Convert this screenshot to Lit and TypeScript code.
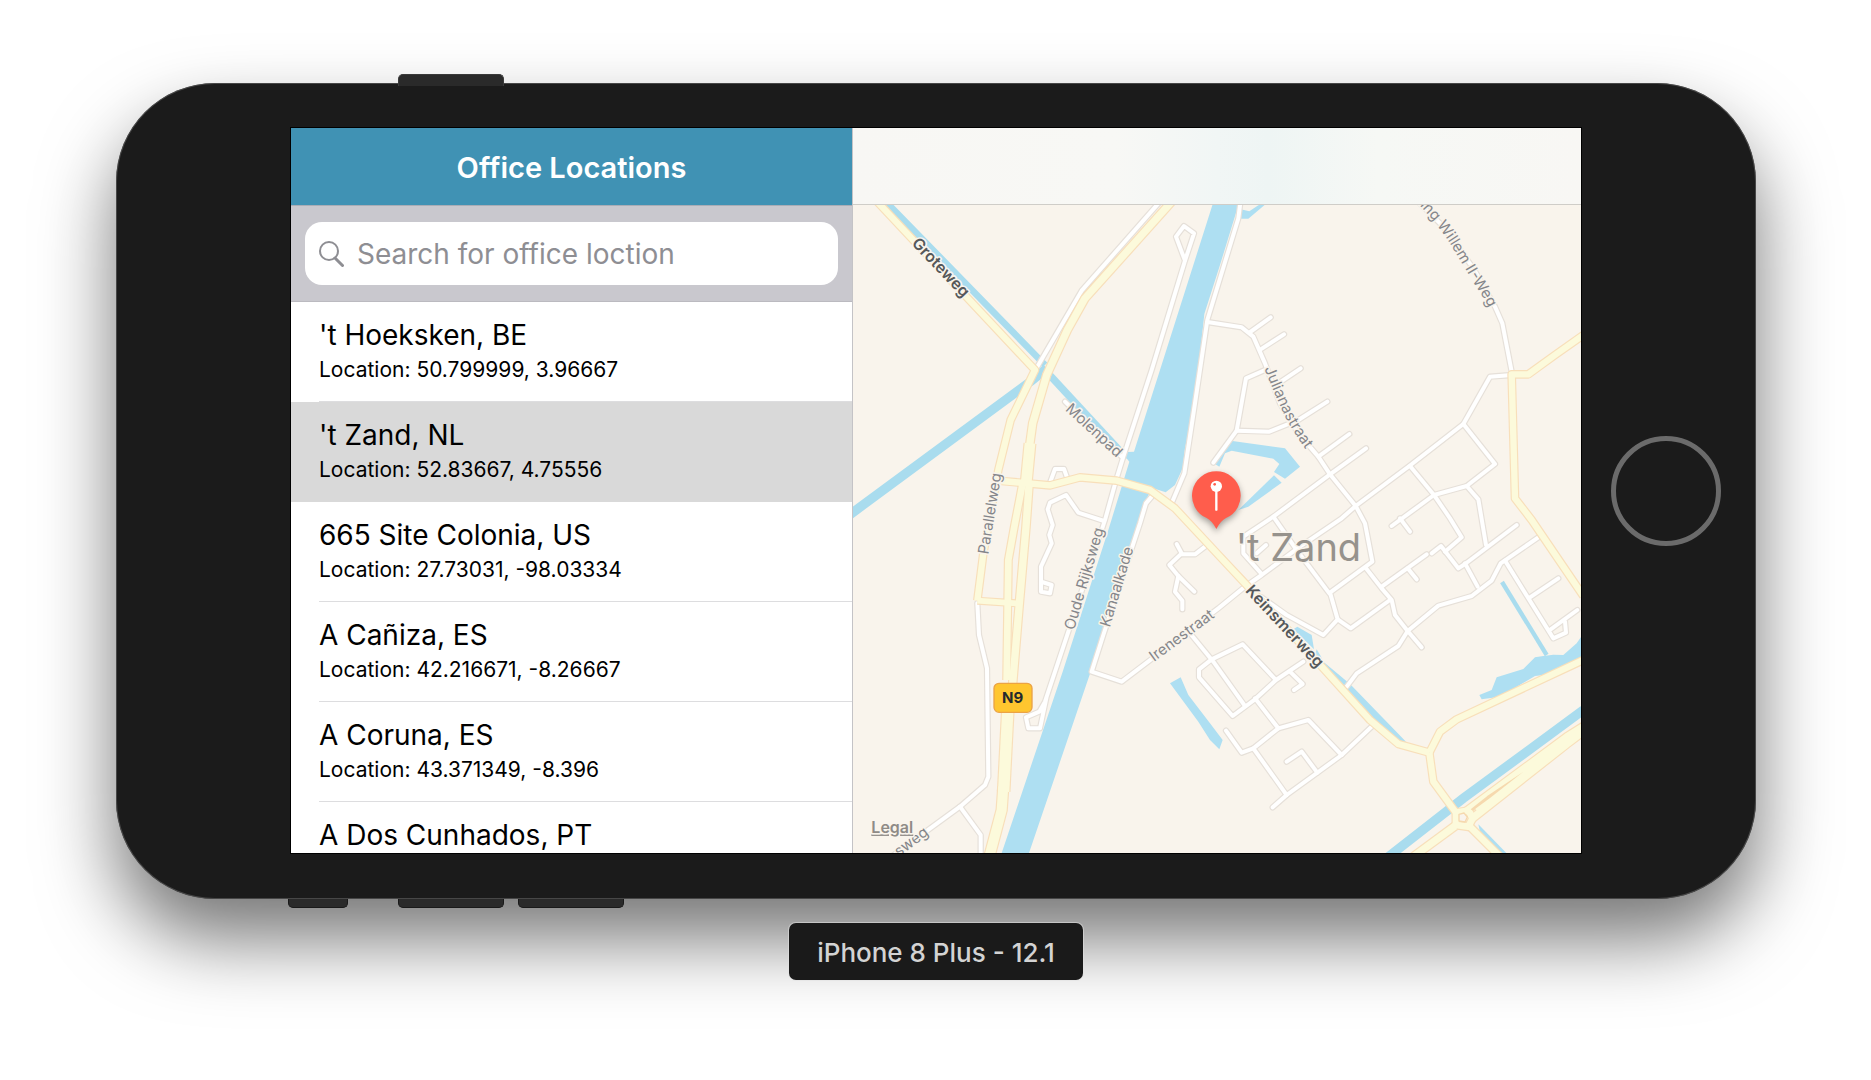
import { LitElement, html, css, svg } from "lit";
import { customElement, property, state } from "lit/decorators.js";
import { classMap } from "lit/directives/class-map.js";

interface Office {
  name: string;
  location: string;
}

const OFFICES: Office[] = [
  { name: "'t Hoeksken, BE", location: "50.799999, 3.96667" },
  { name: "'t Zand, NL", location: "52.83667, 4.75556" },
  { name: "665 Site Colonia, US", location: "27.73031, -98.03334" },
  { name: "A Cañiza, ES", location: "42.216671, -8.26667" },
  { name: "A Coruna, ES", location: "43.371349, -8.396" },
  { name: "A Dos Cunhados, PT", location: "" },
];

/* Map geometry, three units to one pixel at the default size. */

const WATER_AREAS = [
  "M1237,-186 L1165,46 L1110,225 L1063,372 L1035,640 L1005,775 L998,835 L975,885 L947,907 L905,893 L880,950 L865,1000 L722,1445 L535,1995 L453,1995 L638,1445 L775,1020 L838,815 L826,800 L832,786 L852,785 L1087,46 L1160,-186 Z",
  "M1142,752 L1305,775 L1350,830 L1305,866 L1272,846 L1288,822 L1270,806 L1145,782 L1125,790 L1108,830 L1095,822 Z",
  "M1272,856 L1295,878 L1195,950 L1165,960 Z",
  "M1172,58 L1198,64 L1225,46 L1250,40 L1195,86 L1172,86 Z",
  "M1342,1310 L1385,1335 L1392,1378 L1330,1318 Z",
  "M1400,1378 L1412,1398 L1420,1415 L1500,1482 L1668,1655 L1640,1660 L1560,1595 L1390,1410 Z",
  "M1888,1515 L1925,1500 L1940,1462 L2020,1437 L2055,1402 L2080,1398 L2110,1394 L2140,1395 L2180,1360 L2195,1338 L2195,1400 L2080,1455 L2055,1458 L1950,1520 L1895,1528 Z",
  "M1885,1903 L1972,1992 L1945,1996 L1892,1935 Z",
  "M960,1480 L992,1462 L1015,1515 L1080,1600 L1118,1650 L1108,1678 L1080,1650 L1045,1595 Z",
];

const CANALS = [
  { d: "M-115,-190 L118,46 L585,525", w: 20 },
  { d: "M585,540 L830,805", w: 22 },
  { d: "M-10,981 L545,572 L590,535", w: 28 },
  { d: "M1956,1176 L2090,1395", w: 13 },
  { d: "M2200,1560 L1840,1825 L1600,2012", w: 28 },
];

const LANES = [
  "M1120,-186 L920,46 L695,302 L562,530",
  "M1005,212 L978,140 L1002,108 L1032,130 L1005,212 L905,540 L820,800 L797,875 L765,990 L655,1325 L585,1535 L568,1565 L528,1582 L535,1615 L570,1615 L590,1520",
  "M645,635 L815,800",
  "M600,878 L615,837 L642,837 L652,865",
  "M762,993 L685,968 L648,915 L600,938 L593,958 L608,1005 L598,1035 L605,1060 L573,1130 L573,1205 L600,1210 L605,1185 L576,1176",
  "M1170,-186 L1170,46 L1165,85 L1072,390 L1035,640 L1003,850 L965,940",
  "M1072,396 L1175,412 L1210,440 L1245,520 L1290,640 L1345,730 L1405,800 L1440,853 L1517,948 L1545,1000 L1567,1115 L1440,1208 L1463,1288 L1420,1335 L1310,1275 L1235,1222",
  "M1463,1288 L1502,1315 L1620,1230",
  "M1548,1135 L1595,1195 L1625,1230 L1635,1275 L1673,1323 L1715,1372",
  "M1595,1190 L1730,1093",
  "M1673,1135 L1700,1168",
  "M1745,1090 L1773,1068 L1825,1135 L1845,1122 L2000,1005",
  "M1785,1085 L1835,1042 L1800,985 L1752,915 L1680,828",
  "M1845,1120 L1883,1190",
  "M1840,702 L1678,828 L1517,948 L1475,985 L1350,1070 L1235,1155 L1185,1190 L1105,1255 L815,1475 L725,1445 L760,1335 L870,1000 L888,940 L905,920",
  "M1840,702 L1920,560 L1985,555",
  "M1840,702 L1935,822 L1850,888 L1752,915 L1625,1008",
  "M1650,985 L1680,1025",
  "M1850,888 L1885,928 L1908,1065",
  "M1610,-60 L1700,30 L1780,110 L1870,235 L1935,350 L1957,400 L1985,545",
  "M1198,428 L1262,382",
  "M1232,478 L1302,433",
  "M1285,580 L1352,535",
  "M1245,540 L1188,565 L1160,722 L1090,818",
  "M1160,722 L1258,725 L1345,690 L1432,635",
  "M1405,800 L1498,732",
  "M1548,775 L1440,853 L1270,980 L1180,1040 L1180,1090 L1235,1152",
  "M1270,980 L1340,1080 L1438,1210",
  "M1220,1090 L1248,1065",
  "M1490,1490 L1520,1450 L1645,1368 L1673,1323 L1765,1247 L1865,1218 L1925,1172 L1952,1120 L2065,1042",
  "M1965,1112 L2110,1345 L2148,1328 L2145,1295",
  "M2102,1318 L2182,1260",
  "M2040,1222 L2125,1165",
  "M980,1062 L995,1090 L958,1125 L985,1158 L1033,1205",
  "M995,1093 L1035,1093 L1065,1070",
  "M985,1158 L975,1205 L997,1232 L997,1258",
  "M1020,1330 L1090,1415 L1185,1548",
  "M1278,1470 L1178,1363 L1085,1408 L1047,1438 L1047,1462 L1148,1578 L1215,1528 L1278,1470 L1360,1415",
  "M1320,1445 L1358,1482 L1332,1500",
  "M1215,1525 L1285,1615 L1210,1675 L1175,1688 L1128,1622",
  "M1285,1615 L1375,1590 L1475,1695",
  "M1565,1610 L1475,1695 L1310,1815 L1268,1852",
  "M1210,1675 L1310,1815",
  "M1310,1715 L1355,1685 L1402,1748",
  "M382,1240 L387,1335 L411,1435 L415,1760 L405,1785 L330,1850 L90,2025",
  "M330,1850 L392,1935 L392,2000",
];

const ROADS = [
  { d: "M-130,-190 L92,46 L555,540 L482,690 L445,840 L400,1090 L382,1232", w: 19 },
  { d: "M382,1232 L500,1240", w: 17 },
  { d: "M1160,-186 L955,46 L705,325 L652,420 L590,555 L548,700 L537,780", w: 22 },
  { d: "M540,760 L528,885", w: 32 },
  { d: "M517,885 L493,1010 L475,1110 L470,1470", w: 20 },
  { d: "M537,885 L528,1010 L508,1240 L488,1480", w: 22 },
  { d: "M474,1550 L461,1805", w: 34 },
  { d: "M460,1790 L455,1860 L418,2000", w: 30 },
  { d: "M455,873 L600,886 L690,862 L800,872 L900,900 L975,955 L1110,1100 L1185,1180 L1420,1435 L1560,1590 L1645,1662 L1738,1688", w: 19 },
  { d: "M1738,1688 L1770,1625 L1820,1588 L2200,1410", w: 19 },
  { d: "M1738,1688 L1750,1775 L1818,1868", w: 19 },
  { d: "M2200,435 L2115,495 L2035,553 L1985,553 L1995,925 L2045,990 L2200,1218", w: 19 },
  { d: "M1815,1908 L1690,2000", w: 22 },
  { d: "M1855,1905 L1950,2000", w: 20 },
  { d: "M1818,1868 L1856,1862 L1868,1885 L1855,1910 L1818,1905 Z", w: 20 },
  { d: "M1850,1862 L2150,1640 L2210,1602", w: 20 },
  { d: "M1866,1886 L2150,1662 L2210,1617", w: 22 },
  { d: "M1880,1862 L2150,1651 L2210,1610", w: 22 },
];

const STREET_LABELS = [
  { id: "molenpad", text: "Molenpad", d: "M644,660 L825,826" },
  { id: "parallelweg", text: "Parallelweg", d: "M415,1094 L461,810" },
  { id: "oude-rijksweg", text: "Oude Rijksweg", d: "M672,1322 L776,970" },
  { id: "kanaalkade", text: "Kanaalkade", d: "M779,1313 L864,1030" },
  { id: "irenestraat", text: "Irenestraat", d: "M912,1416 L1140,1248" },
  { id: "julianastraat", text: "Julianastraat", d: "M1243,536 Q1266,594 1297,662 T1405,829" },
  { id: "sweg", text: "sweg", d: "M147,2001 L270,1908" },
];

const MAIN_LABELS = [
  { id: "groteweg", text: "Groteweg", d: "M183,162 L374,362" },
  { id: "keinsmerweg", text: "Keinsmerweg", d: "M1184,1204 L1438,1475" },
];

@customElement("office-map")
export class OfficeMap extends LitElement {
  static styles = css`
    :host {
      display: grid;
      grid-template: minmax(0, 1fr) / minmax(0, 1fr);
      overflow: hidden;
      background: #f9f4ec;
    }
    .canvas,
    .bar {
      grid-area: 1 / 1;
    }
    .canvas {
      display: block;
      width: 100%;
      height: 100%;
    }
    .bar {
      align-self: start;
      height: 76px;
      border-bottom: 1px solid #cfcdc8;
      background: linear-gradient(90deg, #f8f7f4 0%, #f8f8f5 36%, #f1f6f5 50%, #eef5f4 57%, #f6f8f5 72%, #f8f7f4 100%);
    }
    .water {
      fill: #aedff2;
    }
    .canal {
      fill: none;
      stroke: #a9dcee;
    }
    .lane-edge,
    .lane,
    .road-edge,
    .road {
      fill: none;
      stroke-linejoin: round;
    }
    .lane-edge {
      stroke: #e6e0d9;
      stroke-width: 19;
      stroke-linecap: round;
    }
    .lane {
      stroke: #ffffff;
      stroke-width: 12;
      stroke-linecap: round;
    }
    .road-edge {
      stroke: #f8dfba;
    }
    .road {
      stroke: #fcfadb;
    }
    .median {
      fill: #f6d9ae;
    }
    .island {
      fill: #f9f4ec;
      stroke: #f6d9ae;
      stroke-width: 4;
      stroke-linejoin: round;
    }
    text {
      font-family: Inter, "Liberation Sans", sans-serif;
      paint-order: stroke;
      stroke: #f9f4ec;
      stroke-width: 9;
      stroke-linejoin: round;
    }
    .street {
      font-size: 45px;
      fill: #85868a;
    }
    .main {
      font-size: 48px;
      font-weight: 600;
      fill: #55585a;
    }
    .town {
      font-size: 114px;
      fill: #96928c;
    }
    .legal {
      font-size: 48px;
      font-weight: 600;
      fill: #8f8b87;
      text-decoration: underline;
    }
    .shield {
      fill: #ffc62f;
      stroke: #eba345;
      stroke-width: 4;
    }
    .shield-text {
      font-size: 45px;
      font-weight: 700;
      fill: #232a2e;
      stroke: none;
      text-anchor: middle;
    }
    .pin {
      filter: drop-shadow(0 9px 9px rgba(0, 0, 0, 0.35));
    }
    .pin-body {
      fill: #ff5d4c;
    }
    .pin-head {
      fill: #ffffff;
    }
    .pin-stem {
      stroke: #ffffff;
      stroke-width: 7;
      stroke-linecap: round;
    }
  `;

  private label(l: { id: string; text: string; d: string }, cls: string) {
    return svg`
      <path id=${l.id} d=${l.d} fill="none"></path>
      <text class=${cls}><textPath href=${"#" + l.id}>${l.text}</textPath></text>`;
  }

  render() {
    return html`
      <svg class="canvas" viewBox="9 -186 2184 2175" preserveAspectRatio="xMidYMid slice" role="img" aria-label="Map of 't Zand">
        ${CANALS.map((c) => svg`<path class="canal" d=${c.d} stroke-width=${c.w}></path>`)}
        ${WATER_AREAS.map((d) => svg`<path class="water" d=${d}></path>`)}
        ${LANES.map((d) => svg`<path class="lane-edge" d=${d}></path>`)}
        ${LANES.map((d) => svg`<path class="lane" d=${d}></path>`)}
        ${ROADS.map((r) => svg`<path class="road-edge" d=${r.d} stroke-width=${r.w + 7}></path>`)}
        ${ROADS.map((r) => svg`<path class="road" d=${r.d} stroke-width=${r.w}></path>`)}
        <path class="median" d="M1862,1858 L1915,1816 L2020,1745 L1920,1824 L1868,1862 Z"></path>
        <path class="island" d="M1827,1873 L1842,1869 L1852,1881 L1845,1896 L1827,1893 Z"></path>
        ${STREET_LABELS.map((l) => this.label(l, "street"))}
        ${MAIN_LABELS.map((l) => this.label(l, "main"))}
        <path id="willem" d="M1498,-185 L1718,56 Q1771,113 1806,170 L1874,283 Q1901,323 1916,354" fill="none"></path>
        <text class="street" text-anchor="end"><textPath href="#willem" startOffset="100%">Koning Willem II-Weg</textPath></text>
        <text class="town" x="1157" y="1113">'t Zand</text>
        <rect class="shield" x="432" y="1480" width="114" height="87" rx="15"></rect>
        <text class="shield-text" x="488" y="1540">N9</text>
        <g class="pin">
          <path class="pin-body" d="M1099,844 A73,73 0 0 1 1128,984 Q1112,992 1099,1017 Q1086,992 1070,984 A73,73 0 0 1 1099,844 Z"></path>
        </g>
        <path class="pin-stem" d="M1099,889 V959"></path>
        <circle class="pin-head" cx="1099" cy="889" r="17"></circle>
        <circle class="pin-body" cx="1094" cy="883" r="4"></circle>
        <a href="#legal"><text class="legal" x="64" y="1930">Legal</text></a>
      </svg>
      <div class="bar"></div>
    `;
  }
}

@customElement("office-list")
export class OfficeList extends LitElement {
  @property({ attribute: false }) offices: Office[] = [];
  @state() private selected = 1;

  static styles = css`
    :host {
      display: flex;
      flex-direction: column;
      overflow: hidden;
      border-right: 1px solid #c4c3c6;
      background: #ffffff;
      color: #000000;
      font-family: Inter, "Liberation Sans", sans-serif;
    }
    .title {
      flex: none;
      margin: 0;
      padding: 21px 0 19px;
      background: #4092b4;
      color: #ffffff;
      font-size: 29px;
      font-weight: 600;
      line-height: 37px;
      text-align: center;
    }
    .search {
      flex: none;
      padding: 17px 14px;
      background: #c9c8ce;
      box-shadow: inset 0 1px #a9adb6, inset 0 -1px #bbbac0;
    }
    .field {
      display: flex;
      align-items: center;
      gap: 13px;
      height: 63px;
      padding: 0 14px;
      border-radius: 17px;
      background: #ffffff;
    }
    .glass {
      flex: none;
      width: 25px;
      height: 26px;
      fill: none;
      stroke: #8e8e93;
    }
    .input {
      flex: 1;
      min-width: 0;
      padding: 0;
      border: 0;
      outline: 0;
      background: none;
      font: inherit;
      font-size: 28px;
      line-height: 36px;
    }
    .input::placeholder {
      color: #8e8e93;
      opacity: 1;
    }
    .rows {
      flex: 1;
      min-height: 0;
      margin: 0;
      padding: 0;
      overflow: hidden;
      list-style: none;
    }
    .row {
      display: block;
      width: 100%;
      padding: 0 0 0 28px;
      border: 0;
      background: none;
      color: inherit;
      font: inherit;
      text-align: left;
    }
    .row.selected {
      background: #d9d9d9;
    }
    .cell {
      display: flex;
      flex-direction: column;
      gap: 3px;
      padding: 15px 0 17px;
      border-bottom: 1px solid #dddddf;
    }
    .row.selected .cell {
      border-color: transparent;
    }
    .name {
      font-size: 28px;
      line-height: 36px;
      white-space: nowrap;
    }
    .place {
      font-size: 21px;
      line-height: 28px;
      white-space: nowrap;
    }
  `;

  render() {
    return html`
      <h1 class="title">Office Locations</h1>
      <div class="search">
        <label class="field">
          <svg class="glass" viewBox="0 0 25 26" aria-hidden="true">
            <circle cx="10" cy="10" r="9" stroke-width="2"></circle>
            <path d="M16 17 L23.500 24.500" stroke-width="3" stroke-linecap="round"></path>
          </svg>
          <input class="input" type="text" placeholder="Search for office loction" aria-label="Search for office loction" />
        </label>
      </div>
      <ul class="rows">
        ${this.offices.map(
          (o, i) => html`
            <li>
              <button
                type="button"
                class=${classMap({ row: true, selected: i === this.selected })}
                @click=${() => (this.selected = i)}
              >
                <span class="cell">
                  <span class="name">${o.name}</span>
                  ${o.location ? html`<span class="place">Location: ${o.location}</span>` : ""}
                </span>
              </button>
            </li>
          `
        )}
      </ul>
    `;
  }
}

@customElement("app-root")
export class AppRoot extends LitElement {
  static styles = css`
    :host {
      display: block;
      box-sizing: border-box;
      min-height: 100vh;
      padding: 74px 115px 0 116px;
      overflow: hidden;
      background: #ffffff;
      font-family: Inter, "Liberation Sans", sans-serif;
    }
    .keys {
      position: relative;
      display: flex;
      height: 9px;
    }
    .keys.top {
      z-index: 1;
      padding-left: 282px;
    }
    .keys.bottom {
      padding-left: 172px;
    }
    .key {
      box-sizing: border-box;
      width: 106px;
      border: 1px solid #191919;
      background: #2a2a2a;
    }
    .top .key {
      height: 12px;
      border-radius: 5px 5px 0 0;
      border-color: #3a3a3a;
      border-bottom: 0;
    }
    .bottom .key {
      border-radius: 0 0 5px 5px;
      border-top: 0;
    }
    .key.mute {
      width: 60px;
      margin-right: 50px;
    }
    .key.up {
      margin-right: 14px;
    }
    .phone {
      display: grid;
      grid-template-columns: 174px minmax(0, 1fr) 174px;
      align-items: center;
      box-sizing: border-box;
      padding: 44px 0 45px;
      border-radius: 99px;
      background: #1b1b1b;
      box-shadow: inset 0 0 0 1px rgba(90, 90, 90, 0.7), 0 40px 76px rgba(0, 0, 0, 0.54);
    }
    .screen {
      grid-column: 2;
      display: grid;
      grid-template: minmax(0, 1fr) / 562fr 728fr;
      aspect-ratio: 1290 / 725;
      overflow: hidden;
      border: 1px solid #000000;
    }
    .home {
      justify-self: center;
      box-sizing: border-box;
      width: 110px;
      height: 110px;
      margin-right: 6px;
      padding: 0;
      border: 5px solid #6b6b6b;
      border-radius: 50%;
      background: none;
    }
    .caption {
      position: relative;
      width: fit-content;
      margin: 15px auto 0;
      padding: 12px 28px 9px;
      border-radius: 7px;
      background: #1a1a1a;
      box-shadow: 0 0 0 1px rgba(225, 225, 225, 0.55);
      color: #d3d3d3;
      font-size: 26px;
      font-weight: 500;
      line-height: 36px;
    }
  `;

  render() {
    return html`
      <div class="keys top"><span class="key"></span></div>
      <main class="phone">
        <div class="screen">
          <office-list .offices=${OFFICES}></office-list>
          <office-map></office-map>
        </div>
        <button type="button" class="home" aria-label="Home"></button>
      </main>
      <div class="keys bottom">
        <span class="key mute"></span>
        <span class="key up"></span>
        <span class="key"></span>
      </div>
      <p class="caption">iPhone 8 Plus - 12.1</p>
    `;
  }
}
